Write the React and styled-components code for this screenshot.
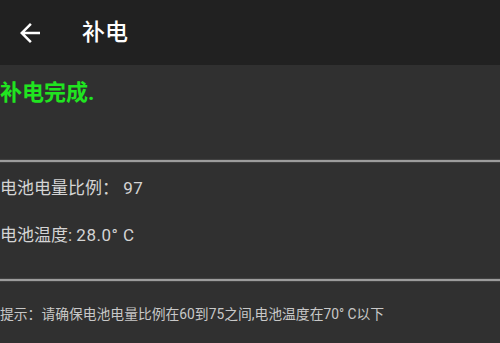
import React from "react";
import styled, { createGlobalStyle } from "styled-components";

const Global = createGlobalStyle`
  html, body { margin: 0; padding: 0; background: #303030; }
  body { font-family: Roboto, "Noto Sans CJK SC", "Noto Sans", sans-serif; }
`;

const Page = styled.div`
  width: 500px;
  height: 343px;
  background: #303030;
  display: flex;
  flex-direction: column;
  overflow: hidden;
`;

const Toolbar = styled.header`
  height: 65px;
  background: #212121;
  display: flex;
  align-items: center;
  flex-shrink: 0;
`;

const BackButton = styled.div`
  width: 30px;
  height: 30px;
  margin-left: 15px;
  margin-top: 1px;
  display: flex;
  color: #ffffff;
`;

const Title = styled.h1`
  margin: 0 0 0 37px;
  font-size: 23px;
  font-weight: 500;
  color: #ffffff;
  line-height: 30px;
`;

const Section = styled.div`
  height: ${(p) => p.h}px;
  padding-top: ${(p) => p.pt}px;
  box-sizing: border-box;
  flex-shrink: 0;
`;

const Status = styled.div`
  font-size: 22px;
  font-weight: 700;
  color: #20e420;
  line-height: 28px;
`;

const Divider = styled.div`
  height: 2px;
  background: #9c9c9c;
  box-shadow: 0 0 1px 1px rgba(70, 70, 70, 0.9);
  flex-shrink: 0;
`;

const InfoRow = styled.div`
  font-size: 17px;
  color: #d4d4d4;
  line-height: 24px;
  height: 47px;
`;

const Value = styled.span`
  letter-spacing: 0.5px;
`;

const Hint = styled.div`
  font-size: 13.8px;
  color: #c8c8c8;
  line-height: 20px;
  white-space: nowrap;
`;

export default function App() {
  return (
    <Page>
      <Global />
      <Toolbar>
        <BackButton>
          <svg width="30" height="30" viewBox="0 0 24 24" fill="currentColor">
            <path d="M20 11H7.83l5.59-5.59L12 4l-8 8 8 8 1.41-1.41L7.83 13H20v-2z" />
          </svg>
        </BackButton>
        <Title>补电</Title>
      </Toolbar>
      <Section h={95} pt={14}>
        <Status>补电完成.</Status>
      </Section>
      <Divider />
      <Section h={117} pt={14}>
        <InfoRow>电池电量比例： <Value>97</Value></InfoRow>
        <InfoRow>电池温度: <Value>28.0° C</Value></InfoRow>
      </Section>
      <Divider />
      <Section h={60} pt={23}>
        <Hint>提示：请确保电池电量比例在60到75之间,电池温度在70° C以下</Hint>
      </Section>
    </Page>
  );
}
